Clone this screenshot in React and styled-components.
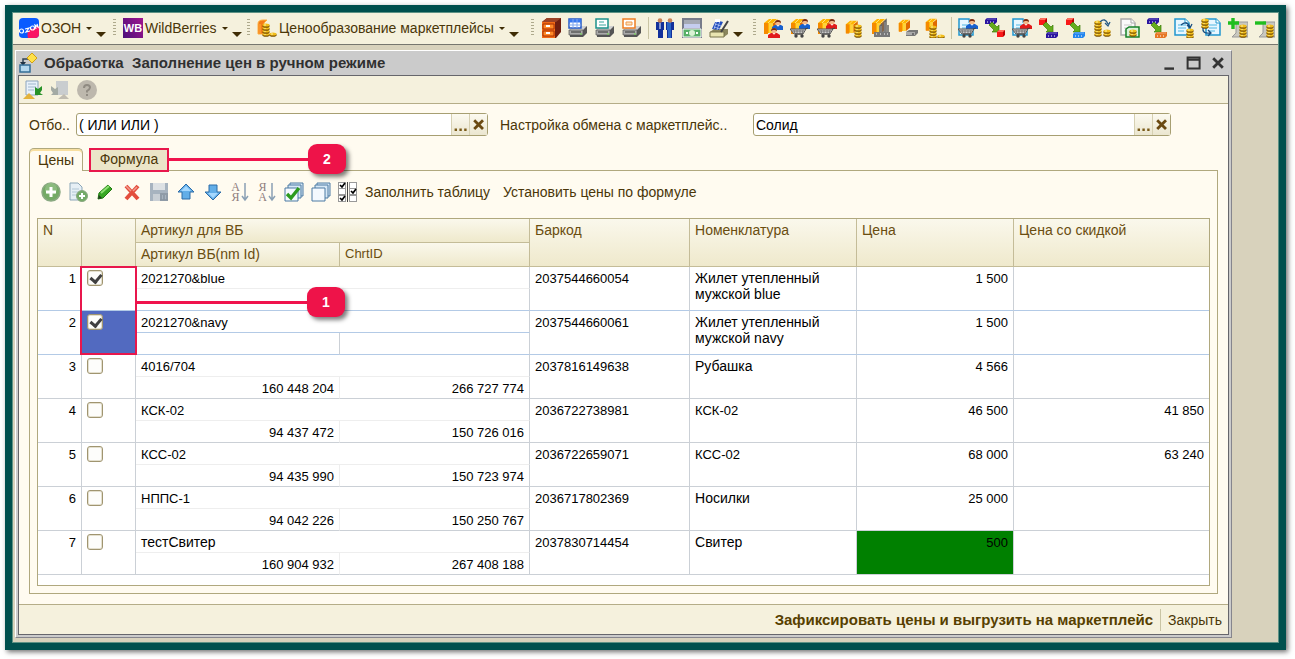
import React, { useState } from "react";
import styled, { createGlobalStyle } from "styled-components";

const items = [
    { id: 1, article: "2021270&blue", nmId: "", chrtId: "", barcode: "2037544660054", name: "Жилет утепленный мужской blue", price: "1 500", sale: "" },
    { id: 2, article: "2021270&navy", nmId: "", chrtId: "", barcode: "2037544660061", name: "Жилет утепленный мужской navy", price: "1 500", sale: "" },
    { id: 3, article: "4016/704", nmId: "160 448 204", chrtId: "266 727 774", barcode: "2037816149638", name: "Рубашка", price: "4 566", sale: "" },
    { id: 4, article: "КСК-02", nmId: "94 437 472", chrtId: "150 726 016", barcode: "2036722738981", name: "КСК-02", price: "46 500", sale: "41 850" },
    { id: 5, article: "КСС-02", nmId: "94 435 990", chrtId: "150 723 974", barcode: "2036722659071", name: "КСС-02", price: "68 000", sale: "63 240" },
    { id: 6, article: "НППС-1", nmId: "94 042 226", chrtId: "150 250 767", barcode: "2036717802369", name: "Носилки", price: "25 000", sale: "" },
    { id: 7, article: "тестСвитер", nmId: "160 904 932", chrtId: "267 408 188", barcode: "2037830714454", name: "Свитер", price: "500", sale: "", changed: true, wide: true },
]

/* icon parts, all on a 20x20 grid */
const Svg = ({ children, size = 20 }) => <svg width={size} height={size} viewBox="0 0 20 20" aria-hidden="true">{children}</svg>

const Box = () => <g>
    <path d="M1 5l5-4h8l-4 4v10H1z" fill="#ffb400" />
    <path d="M1 5h4v11H1z" fill="#f58a00" />
    <path d="M6 5h4v10H6z" fill="#ffd23a" />
    <path d="M10 5l5-4v10l-5 4z" fill="#e06a00" />
    <path d="M5 5l4-4M10 5l5-4" stroke="#ffe27a" />
</g>
const Person = ({ x, y, color }) => <g transform={`translate(${x} ${y})`}>
    <path d="M-1 10V7l3-2h6l3 2v3z" fill={color} />
    <circle cx="5" cy="3" r="2.8" fill="#f3b98c" />
    <path d="M2 3Q2 0 5 0t3 3L6 2H4z" fill="#7a2a10" />
    <path d="M4 5l1 2 1-2z" fill="#fff" />
</g>
const Cart = () => <g>
    <path d="M0 11h16l-3 5H4z" fill="#cfcfcf" stroke="#555" />
    <path d="M4 12l1 4M7 12v4M10 12v4M13 12l-1 4M2 13h12" stroke="#777" />
    <path d="M13 16H5M15 11l3-1" stroke="#444" />
    <circle cx="6" cy="18" r="1.7" fill="#444" /><circle cx="12" cy="18" r="1.7" fill="#444" />
</g>
const Coins = ({ x, y, n = 4 }) => <g transform={`translate(${x} ${y})`}>
    {[...Array(n)].map((_, i) => <g key={i}>
        <ellipse cx="4" cy={n * 3 - i * 3} rx="3.7" ry="1.8" fill="#7a5000" />
        <ellipse cx="4" cy={n * 3 - i * 3 - 1} rx="3.5" ry="1.5" fill="#f2be1c" />
        <path d={`M2 ${n * 3 - i * 3 - 1}h2`} stroke="#fff3a0" />
    </g>)}
</g>
const Page = ({ x = 0, y = 0, gray }) => <g transform={`translate(${x} ${y})`}>
    <path d="M1 1h10l4 4v12H1z" fill={gray ? "#fafafa" : "#e8f7ff"} stroke={gray ? "#aaa" : "#2197cf"} strokeWidth="1.5" />
    <path d="M11 1v4h4" fill="#fff" stroke={gray ? "#aaa" : "#2197cf"} />
    <path d="M4 7h8M4 10h8M4 13h6" stroke={gray ? "#ccc" : "#4eb6e2"} />
</g>
const Cube = ({ x, y }) => <g transform={`translate(${x} ${y})`}>
    <path d="M0 2l2-2h6v5L6 7H0z" fill="#b80000" /><path d="M0 2h6v5H0z" fill="#f91919" /><path d="M0 2l2-2h6L6 2z" fill="#ff6b5a" />
</g>
const Block = ({ x, y, color }) => <g transform={`translate(${x} ${y})`}>
    <path d="M0 2l2-2h10v4l-2 2H0z" fill={color} /><path d="M2 4h1M5 4h1M8 4h1" stroke="#fff" />
    <path d="M2 1h9" stroke="#fff" opacity=".35" />
</g>
const Link = () => <path d="M5 6l2-2 5 5 2-2v7H7l2-2-5-5z" fill="#65ad1c" stroke="#3d7b08" strokeWidth=".7" />
const Printer = ({ color, children }) => <Svg>
    <path d="M2 12l5-4h12v7l-4 4H2z" fill="#555" />
    <path d="M2 12l5-4h12l-4 4z" fill="#d2d2d2" />
    <path d="M1 12h14v5H1z" fill="#aaa" stroke="#555" strokeWidth=".7" />
    <path d="M3 14h10" stroke="#333" /><path d="M12 16h2" stroke="#6fe04a" />
    <path d="M1 1h12v9H1z" fill="#fff" stroke={color} strokeWidth="1.5" />
    {children}
</Svg>

const OzonIcon = () => <Svg>
    <rect width="20" height="20" rx="4" fill="#0a5bff" />
    <path d="M9 20Q7 13 12 11l8-3v8q0 4-4 4z" fill="#fa1464" />
    <circle cx="2.5" cy="13" r="2" fill="none" stroke="#fff" strokeWidth="1.2" />
    <path d="M6 11l4-1-3 4 4-1" fill="none" stroke="#fff" strokeWidth="1.2" />
    <circle cx="13.5" cy="10" r="2" fill="none" stroke="#fff" strokeWidth="1.2" />
    <path d="M17 11l-1-4 3 2-1-3" fill="none" stroke="#fff" strokeWidth="1.2" />
</Svg>
const PriceIcon = () => <Svg>
    <path d="M1 16V6q0-4 5-4h4l-3 3v11zM3 6v9" fill="#f47b18" stroke="#ffae3a" />
    <Coins x={5} y={5} n={4} /><Coins x={12} y={14} n={1} />
</Svg>

const catalogIcons = [
    ["Справочник", <Svg><path d="M1 4l5-4h14v14l-5 6H1z" fill="#6f1e10" /><path d="M1 4l5-4h14l-5 4z" fill="#9b4226" /><path d="M1 4h13v16H1z" fill="#f26a16" /><path d="M2 6h11v5H2zM2 13h11v5H2z" fill="#ff8a28" stroke="#a92f00" /><path d="M5 8h4M5 15h4" stroke="#fff" strokeWidth="2" /></Svg>],
    ["Печать таблицы", <Printer color="#2559c5"><path d="M1 3h12" stroke="#3677f0" strokeWidth="3" /><path d="M1 7h12M5 1v9M9 1v9" stroke="#7fa7ef" /></Printer>],
    ["Печать документа", <Printer color="#1d928c"><path d="M4 4h5M4 7h7" stroke="#38a59e" /></Printer>],
    ["Печать этикетки", <Printer color="#ee7d22"><path d="M4 4h6v3H4z" fill="#ffe1b8" stroke="#ee9a50" /></Printer>],
    "sep",
    ["Контрагенты", <Svg><path d="M1 4h8v8H8v8H3v-8H1zM11 4h8v8h-2v8h-5v-8h-1z" fill="#12309b" /><path d="M12 4h4v16h-3v-8h-1z" fill="#2b64c5" /><circle cx="5" cy="2.5" r="2.3" fill="#c98357" /><circle cx="15" cy="2.5" r="2.3" fill="#c98357" /><path d="M5 5v6" stroke="#fff" /></Svg>],
    ["Деньги", <Svg><path d="M0 0h20v20H0z" fill="#777c8a" /><path d="M2 2h16v4H2z" fill="#a5a9b4" /><path d="M2 6h16v4H2z" fill="#c5cdef" /><path d="M1 11h18v8H1z" fill="#57af68" stroke="#fff" /><circle cx="10" cy="15" r="3" fill="#d9f3d4" /><path d="M4 15h2M14 15h2" stroke="#fff" strokeWidth="2" /></Svg>],
    ["Отчёт", <Svg><path d="M1 14l4-3h14v5l-4 3H1z" fill="#8a865e" /><path d="M1 14h14v5H1z" fill="#e9e5b1" stroke="#77724b" /><path d="M3 11l4-9 7 2-4 8z" fill="#234ebd" /><path d="M5 9l6 2M6 6l6 2M8 2L5 11M11 3L8 12" stroke="#d5e2ff" strokeWidth=".6" /><path d="M6 1h5v3H6z" fill="#fff" /><path d="M12 14l7-11" stroke="#444" strokeWidth="2" /></Svg>],
    "more",
]

const goodsIcons = [
    ["Покупатели", <Svg><Box /><Person x={10} y={2} color="#1760cf" /><Person x={6} y={10} color="#e11b1b" /></Svg>],
    ["Заказ", <Svg><Box /><Person x={10} y={1} color="#1760cf" /><Cart /></Svg>],
    ["Возврат", <Svg><Box /><Person x={10} y={1} color="#e11b1b" /><Cart /></Svg>],
    ["Цены", <Svg><g transform="translate(1 2) scale(.85)"><Box /></g><Coins x={10} y={6} n={4} /></Svg>],
    ["Склад", <Svg><Box /><path d="M3 14h16v5H3z" fill="#777" /><path d="M9 14V8l2-2v8M13 14V4l2-2v12M17 14V7" fill="#ccc" stroke="#666" strokeWidth="1.5" /><path d="M5 16h1M9 16h1M13 16h1M16 16h1" stroke="#fff" /></Svg>],
    ["Остатки", <Svg><g transform="translate(0 1) scale(.8)"><Box /></g><path d="M8 14l3-2h9v3l-3 3H8z" fill="#777" /><path d="M8 14h9v3H8z" fill="#aaa" /><path d="M14 16h2" stroke="#333" /></Svg>],
    ["Скидки", <Svg><g transform="scale(.8)"><Box /></g><Coins x={4} y={7} n={4} /><Coins x={12} y={16} n={1} /></Svg>],
    "sep",
    ["Заказ покупателя", <Svg><Page /><Person x={9} y={1} color="#1760cf" /><Cart /></Svg>],
    ["Обмен", <Svg><Block x={0} y={0} color="#2b15a0" /><Link /><Cube x={12} y={12} /></Svg>],
    ["Возврат покупателя", <Svg><Page /><Person x={9} y={1} color="#e11b1b" /><Cart /></Svg>],
    ["Выгрузка", <Svg><Cube x={0} y={0} /><Link /><Block x={7} y={14} color="#2b15a0" /></Svg>],
    ["Загрузка", <Svg><Cube x={0} y={0} /><Link /><Block x={7} y={14} color="#2386ee" /></Svg>],
    ["Пересчёт цен", <Svg><Coins x={1} y={2} n={5} /><Coins x={10} y={11} n={2} /><path d="M7 4q5-5 8 2m-3-1l3 3 2-4" fill="none" stroke="#275a86" strokeWidth="1.3" /></Svg>],
    ["Документ цен", <Svg><Page gray /><path d="M6 11l3-2h10v10H6z" fill="#d9f2d9" stroke="#168129" strokeWidth="1.5" /><Coins x={9} y={11} n={2} /></Svg>],
    ["Перемещение", <Svg><Block x={0} y={0} color="#2b15a0" /><Link /><Block x={8} y={14} color="#e77724" /></Svg>],
    ["Выгрузить цены", <Svg><Page /><Coins x={12} y={10} n={3} /><path d="M7 7q6-5 9 2m-3-2l3 3 2-4" fill="none" stroke="#174d80" strokeWidth="1.3" /></Svg>],
    ["Загрузить цены", <Svg><Page x={4} /><Coins x={0} y={0} n={3} /><path d="M2 10q-1 6 7 5m-2-3l3 3-3 3" fill="none" stroke="#174d80" strokeWidth="1.3" /></Svg>],
    ["Добавить цены", <Svg><path d="M4 19l4-4V4h12v15z" fill="#c9c8c0" stroke="#999" /><Coins x={11} y={6} n={4} /><path d="M5 0v11M0 5h11" stroke="#1fbe1f" strokeWidth="3.4" /></Svg>],
    ["Удалить цены", <Svg><path d="M4 19l4-4V4h12v15z" fill="#c9c8c0" stroke="#999" /><Coins x={11} y={6} n={4} /><path d="M0 5h11" stroke="#1fbe1f" strokeWidth="3.4" /></Svg>],
]

const Sheets = ({ checked }) => <Svg>
    <path d="M6 1h13v13H6z" fill="#d7e8f6" stroke="#4c7ba3" /><path d="M4 3h13v13H4z" fill="#d7e8f6" stroke="#4c7ba3" />
    <path d="M1 6h13v13H1z" fill="#f4f9fe" stroke="#4c7ba3" />
    {checked && <path d="M3 12l4 4 8-10" fill="none" stroke="#2c9b1e" strokeWidth="3.4" />}
</Svg>
const BigArrow = ({ down }) => <Svg>
    <path d="M10 2l8 8h-4v7H6v-7H2z" transform={down ? "rotate(180 10 10)" : undefined} fill="#62aee8" stroke="#2d6ca8" />
    <path d="M10 4l5 5H5z" transform={down ? "rotate(180 10 10)" : undefined} fill="#a5d8ff" />
</Svg>
const TickBoxes = () => <Svg>
    <path d="M0 0h8v20H0zM11 0h8v20h-8z" fill="#999" />
    <path d="M1 1h6v5H1zM1 7h6v5H1zM1 14h6v5H1zM12 1h6v5h-6zM12 7h6v5h-6zM12 14h6v5h-6z" fill="#fff" />
    <path d="M9.5 0v20" stroke="#444" />
    <path d="M2 3l2 2 3-4M2 16l2 2 3-4M13 9l2 2 3-4" fill="none" stroke="#000" strokeWidth="1.7" />
</Svg>
const SortIcon = ({ first, last }) => <Sort>
    <SortLetters><span>{first}</span><span>{last}</span></SortLetters>
    <svg width="8" height="20" viewBox="0 0 8 20" aria-hidden="true"><path d="M4 1v16M1 14l3 4 3-4" fill="none" stroke="#8aa0b4" strokeWidth="1.5" /></svg>
</Sort>

const tableIcons = [
    ["Добавить", <Svg><circle cx="10" cy="10" r="9" fill="#74aa66" stroke="#8aa982" strokeWidth="1.5" /><circle cx="10" cy="7" r="6" fill="#9bc68e" opacity=".6" /><path d="M10 5v10M5 10h10" stroke="#fff" strokeWidth="3" /></Svg>],
    ["Скопировать", <Svg><path d="M2 1h8l4 4v13H2z" fill="#e6eff5" stroke="#8ba6b8" /><path d="M4 7h7M4 10h7M4 13h5" stroke="#b2c7d5" /><circle cx="14" cy="14" r="5.5" fill="#74aa66" stroke="#8aa982" /><path d="M14 11v6M11 14h6" stroke="#fff" strokeWidth="2" /></Svg>],
    ["Изменить", <Svg><path d="M3 17l1-6 9-8 4 4-9 9z" fill="#39a724" stroke="#227b13" /><path d="M6 11l8-7" stroke="#8fe073" strokeWidth="2" /><path d="M3 17l1-4 3 3z" fill="#24401f" /></Svg>],
    ["Удалить", <Svg><path d="M4 4l12 13M16 4L4 17" stroke="#e34e3d" strokeWidth="4" /><path d="M4 4l5 5M15 5l-4 4" stroke="#f39b8f" strokeWidth="1.5" /></Svg>],
    ["Сохранить", <Svg><path d="M1 1h18v18H1z" fill="#a7b3bf" /><path d="M4 1h12v7H4z" fill="#dde1e4" /><path d="M4 12h7v7H4z" fill="#c9cfd5" /><path d="M11 12h8M11 18h8M12 13v5M15 13v5M18 13v5" stroke="#8894a0" strokeWidth="1.5" /></Svg>],
    ["Вверх", <BigArrow />],
    ["Вниз", <BigArrow down />],
    ["По возрастанию", <SortIcon first="А" last="Я" />],
    ["По убыванию", <SortIcon first="Я" last="А" />],
    ["Отметить все", <Sheets checked />],
    ["Снять отметки", <Sheets />],
    ["Инвертировать", <TickBoxes />],
]

function IconButtons({ icons }) {
    return icons.map((icon, i) => {
        if (icon === "sep") return <Separator key={i} tight />
        if (icon === "more") return <More key={i} aria-label="Ещё" />
        return <IconButton key={i} aria-label={icon[0]}>{icon[1]}</IconButton>
    })
}

function Field({ id, label, value }) {
    const [text, setText] = useState(value)
    return (<>
        <label htmlFor={id}>{label}</label>
        <FieldBox>
            <input id={id} value={text} onChange={(e) => setText(e.target.value)} />
            <FieldButton aria-label="Выбрать"><Svg size={16}><path d="M2 16h3M8 16h3M14 16h3" stroke="#7a5a18" strokeWidth="3" /></Svg></FieldButton>
            <FieldButton aria-label="Очистить" onClick={() => setText("")}><Svg size={16}><path d="M4 4l11 11M15 4L4 15" stroke="#6b4a12" strokeWidth="3.5" /></Svg></FieldButton>
        </FieldBox>
    </>)
}

export default function App() {
    const [checked, setChecked] = useState([1, 2])

    function toggle(id) {
        setChecked(checked.includes(id) ? checked.filter((c) => c !== id) : [...checked, id])
    }

    return (<Frame>
        <GlobalStyle />
        <Desktop>
            <MainBar>
                <Group width={99}>
                    <MenuButton><OzonIcon />ОЗОН<Caret /></MenuButton>
                    <More aria-label="Ещё" />
                </Group>
                <Group width={134} grip>
                    <MenuButton><WbLogo>WB</WbLogo>WildBerries<Caret /></MenuButton>
                    <More aria-label="Ещё" />
                </Group>
                <Group width={284} grip>
                    <MenuButton><PriceIcon />Ценообразование маркетплейсы<Caret /></MenuButton>
                    <More aria-label="Ещё" />
                </Group>
                <Group width={222} grip><IconButtons icons={catalogIcons} /></Group>
                <Group grip><IconButtons icons={goodsIcons} /></Group>
            </MainBar>
            <Window>
                <TitleBar>
                    <Svg><path d="M4 11V6h8" fill="none" stroke="#345" strokeWidth="1.5" /><path d="M1 9l3 4 3-4z" fill="#234" /><path d="M1 12h10v7H1z" fill="#b5d8ee" stroke="#356e96" strokeWidth="1.5" /><path d="M13 0l5 5-5 5-5-5z" fill="#ffe14a" stroke="#d2a112" /></Svg>
                    <h1>Обработка&nbsp; Заполнение цен в ручном режиме</h1>
                    <WindowButton aria-label="Свернуть"><Svg size={16}><path d="M3 17h12" stroke="#333" strokeWidth="3" /></Svg></WindowButton>
                    <WindowButton aria-label="Развернуть"><Svg size={16}><path d="M2 3h15v14H2zM2 6h15" fill="none" stroke="#333" strokeWidth="2.5" /></Svg></WindowButton>
                    <WindowButton aria-label="Закрыть окно"><Svg size={16}><path d="M4 4l12 12M16 4L4 16" stroke="#333" strokeWidth="3.5" /></Svg></WindowButton>
                </TitleBar>
                <Content>
                    <CommandBar>
                        <IconButton aria-label="Загрузить"><Svg><path d="M3 1h12v14H3z" fill="#e8f1fa" stroke="#8ca5bd" /><path d="M5 4h8M5 7h8M5 10h6" stroke="#9fb7cc" /><path d="M0 19l6-6 6 6z" fill="#e3b33a" /><path d="M19 6l-4 3-3-2v8h8l-3-2 2-3z" fill="#279228" /></Svg></IconButton>
                        <IconButton aria-label="Восстановить"><Svg><path d="M6 1h12v14H6z" fill="#c9cdcf" /><path d="M8 19l6-5 5 5z" fill="#c0bcb0" /><path d="M1 6l4 3 3-2v8H1l2-2-2-3z" fill="#a3aaa4" /></Svg></IconButton>
                        <IconButton aria-label="Справка"><Svg><circle cx="10" cy="10" r="10" fill="#bdb8ad" /><path d="M7 8q0-3 3-3t3 2.5q0 1.5-3 3.5v1.5M10 14v2" fill="none" stroke="#908b82" strokeWidth="2" /></Svg></IconButton>
                    </CommandBar>
                    <Fields>
                        <Field id="filter" label="Отбо.." value="( ИЛИ ИЛИ )" />
                        <Field id="settings" label="Настройка обмена с маркетплейс.." value="Солид" />
                    </Fields>
                    <Tabs role="tablist">
                        <Tab role="tab" aria-selected="true" active>Цены</Tab>
                        <Marked>
                            <Tab role="tab" aria-selected="false">Формула</Tab>
                            <Callout><Pointer /><Badge>2</Badge></Callout>
                        </Marked>
                    </Tabs>
                    <Panel>
                        <TableBar>
                            <IconButtons icons={tableIcons} />
                            <TextButton>Заполнить таблицу</TextButton>
                            <TextButton>Установить цены по формуле</TextButton>
                        </TableBar>
                        <TableBox>
                            <Table>
                                <colgroup>
                                    {[44, 54, 204, 190, 160, 167, 157].map((w, i) => <Col key={i} w={w} />)}
                                    <col />
                                </colgroup>
                                <thead>
                                    <tr>
                                        <Head rowSpan={2}>N</Head>
                                        <Head rowSpan={2} aria-label="Отметка" />
                                        <Head colSpan={2}>Артикул для ВБ</Head>
                                        <Head rowSpan={2}>Баркод</Head>
                                        <Head rowSpan={2}>Номенклатура</Head>
                                        <Head rowSpan={2}>Цена</Head>
                                        <Head rowSpan={2}>Цена со скидкой</Head>
                                    </tr>
                                    <tr>
                                        <Head>Артикул ВБ(nm Id)</Head>
                                        <Head latin>ChrtID</Head>
                                    </tr>
                                </thead>
                                <tbody>
                                    {items.map((item) => <React.Fragment key={item.id}>
                                        <tr>
                                            <Cell rowSpan={2} right blue={item.id < 3}>{item.id}</Cell>
                                            <Cell rowSpan={2} wide blue={item.id < 3} selected={item.id === 2}>
                                                <Check type="checkbox" aria-label={`Строка ${item.id}`} checked={checked.includes(item.id)} onChange={() => toggle(item.id)} />
                                                {item.id === 1 && <Callout rows><Pointer long /><Badge>1</Badge></Callout>}
                                            </Cell>
                                            <Cell colSpan={2} wide={item.wide} light={item.id !== 2} blue={item.id === 2}>{item.article}</Cell>
                                            <Cell rowSpan={2} blue={item.id < 3}>{item.barcode}</Cell>
                                            <Cell rowSpan={2} blue={item.id < 3} wide={/[а-я]/.test(item.name)}>{item.name}</Cell>
                                            <Cell rowSpan={2} blue={item.id < 3} right changed={item.changed}>{item.price}</Cell>
                                            <Cell rowSpan={2} blue={item.id < 3} right>{item.sale}</Cell>
                                        </tr>
                                        <tr>
                                            <Cell right blue={item.id < 3} lightSide={item.id !== 2}>{item.nmId}</Cell>
                                            <Cell right blue={item.id < 3}>{item.chrtId}</Cell>
                                        </tr>
                                    </React.Fragment>)}
                                </tbody>
                            </Table>
                        </TableBox>
                    </Panel>
                    <Footer>
                        <TextButton bold>Зафиксировать цены и выгрузить на маркетплейс</TextButton>
                        <Separator />
                        <TextButton>Закрыть</TextButton>
                    </Footer>
                </Content>
            </Window>
        </Desktop>
    </Frame>)
}

const GlobalStyle = createGlobalStyle`
*{
    box-sizing: border-box;
}
body{
    margin: 0;
    background-color: #FFFFFF;
    font-family: "Liberation Sans", Arial, sans-serif;
    font-size: 14px;
    line-height: 16px;
    color: #4A3608;
}
button, input{
    font: inherit;
    color: inherit;
    padding: 0;
    margin: 0;
    border: none;
    background: none;
}
svg{
    display: block;
    flex: none;
}
`
const Frame = styled.div`
padding: 5px 9px 9px 5px;
`
const Desktop = styled.main`
border: 7px solid #00504E;
outline: 1px solid #5E9285;
outline-offset: -8px;
padding: 1px;
background-color: #D8D2BC;
box-shadow: 2px 2px 5px #00000090;
`
const MainBar = styled.div`
height: 32px;
display: flex;
padding-bottom: 1px;
background-color: #F5F1DD;
border-bottom: 1px solid #77776F;
`
const Group = styled.div.withConfig({ shouldForwardProp: (p) => p !== "grip" && p !== "width" })`
width: ${(props) => props.width ? `${props.width}px` : "auto"};
flex: none;
display: flex;
align-items: center;
gap: 7px;
padding-left: 6px;
&::before{
    content: "";
    display: ${(props) => props.grip ? "block" : "none"};
    width: 3px;
    height: 18px;
    margin-left: -5px;
    background: repeating-linear-gradient(#AEA98C 0 1px, transparent 1px 3px);
}
`
const MenuButton = styled.button`
display: flex;
align-items: center;
gap: 2px;
white-space: nowrap;
`
const Caret = styled.span`
margin-left: 3px;
border: 3px solid transparent;
border-top-color: #3F2D05;
border-bottom: none;
`
const More = styled.button`
align-self: flex-end;
margin: 0 0 6px -3px;
border: 5px solid transparent;
border-top-color: #3F2D05;
border-bottom: none;
`
const WbLogo = styled.span`
width: 20px;
height: 20px;
background: linear-gradient(60deg, #4B0F7A, #A0158F);
color: #FFFFFF;
font-size: 11px;
font-weight: 700;
line-height: 20px;
text-align: center;
`
const IconButton = styled.button`
width: 20px;
height: 20px;
flex: none;
`
const Sort = styled.span`
display: flex;
`
const SortLetters = styled.span`
width: 11px;
font-family: "Liberation Serif", serif;
font-size: 12px;
line-height: 10px;
color: #8F7D7D;
span{
    display: block;
}
`
const Separator = styled.span.withConfig({ shouldForwardProp: (p) => p !== "tight" })`
width: 1px;
height: 22px;
margin: ${(props) => props.tight ? "0 -1px" : "0"};
background-color: #C9C4A4;
`
const Window = styled.section`
margin: 5px 46px 4px 2px;
padding: 0 2px 2px;
background-color: #CBCBCB;
border: 1px solid #FFFFFF;
border-right-color: #85858D;
border-bottom-color: #85858D;
`
const TitleBar = styled.header`
height: 24px;
display: flex;
align-items: center;
gap: 8px;
padding: 0 3px 0 1px;
color: #303030;
h1{
    flex: 1;
    margin: 0 0 0 -3px;
    font-size: 15px;
    line-height: 16px;
}
`
const WindowButton = styled.button`
width: 16px;
height: 16px;
`
const Content = styled.div`
background-color: #FFFBF0;
border: 1px solid #66666B;
`
const CommandBar = styled.div`
height: 28px;
display: flex;
align-items: center;
gap: 7px;
padding-left: 4px;
background-color: #F5F1DD;
border-bottom: 1px solid #B5AD88;
`
const Fields = styled.div`
display: grid;
grid-template-columns: 47px 412fr 265px 418fr;
align-items: center;
padding: 9px 57px 12px 10px;
label + div + label{
    padding-left: 12px;
}
`
const FieldBox = styled.div`
height: 23px;
display: flex;
background-color: #FFFFFF;
border: 1px solid #A79F72;
border-radius: 3px;
color: #000000;
input{
    flex: 1;
    min-width: 0;
    padding-left: 2px;
    outline: none;
}
`
const FieldButton = styled.button`
width: 18px;
display: flex;
align-items: center;
justify-content: center;
background: linear-gradient(#FCFAF0, #EBE6D0);
border-left: 1px solid #D6D0B2;
`
const Tabs = styled.div`
display: flex;
gap: 6px;
padding-left: 10px;
`
const Marked = styled.div`
position: relative;
`
const Tab = styled.button.withConfig({ shouldForwardProp: (p) => p !== "active" })`
position: relative;
width: ${(props) => props.active ? "54px" : "80px"};
height: ${(props) => props.active ? "23px" : "22px"};
margin-bottom: ${(props) => props.active ? "-1px" : "0"};
background-color: ${(props) => props.active ? "#FFFBF0" : "#EBE5C8"};
border: ${(props) => props.active ? "1px solid #B0A87E" : "none"};
border-bottom: none;
border-radius: 5px 5px 0 0;
box-shadow: ${(props) => props.active ? "inset 0 2px #F8DFA0" : "none"};
`
const Callout = styled.div.withConfig({ shouldForwardProp: (p) => p !== "rows" })`
position: absolute;
z-index: 2;
top: ${(props) => props.rows ? "-1px" : "0"};
left: ${(props) => props.rows ? "-2px" : "0"};
width: ${(props) => props.rows ? "57px" : "80px"};
height: ${(props) => props.rows ? "89px" : "24px"};
border: 2px solid #E8174C;
pointer-events: none;
`
const Pointer = styled.span.withConfig({ shouldForwardProp: (p) => p !== "long" })`
position: absolute;
left: 100%;
top: ${(props) => props.long ? "33px" : "8px"};
width: ${(props) => props.long ? "172px" : "141px"};
height: 3px;
background-color: #F0134D;
& + span{
    top: ${(props) => props.long ? "19px" : "-6px"};
    left: ${(props) => props.long ? "225px" : "217px"};
}
`
const Badge = styled.span`
position: absolute;
width: 38px;
height: 30px;
border-radius: 9px;
background-color: #EE1349;
box-shadow: 3px 3px 4px #00000080;
color: #FFFFFF;
font-size: 14px;
font-weight: 700;
line-height: 30px;
text-align: center;
`
const Panel = styled.div`
margin: 0 10px 10px;
padding: 0 7px 7px;
border: 1px solid #B0A87E;
`
const TableBar = styled.div`
height: 47px;
display: flex;
align-items: center;
gap: 7px;
padding: 0 4px 5px;
`
const TextButton = styled.button.withConfig({ shouldForwardProp: (p) => p !== "bold" })`
font-size: ${(props) => props.bold ? "15px" : "14px"};
font-weight: ${(props) => props.bold ? 700 : 400};
color: ${(props) => props.bold ? "#574000" : "#4A3608"};
white-space: nowrap;
& + &{
    margin-left: 6px;
}
`
const TableBox = styled.div`
padding-bottom: 10px;
background-color: #FFFFFF;
border: 1px solid #B0A87E;
`
const Table = styled.table`
width: 100%;
table-layout: fixed;
border-collapse: separate;
border-spacing: 0;
`
const Col = styled.col.withConfig({ shouldForwardProp: (p) => p !== "w" })`
width: ${(props) => props.w}px;
`
const Head = styled.th.withConfig({ shouldForwardProp: (p) => p !== "latin" })`
height: 24px;
padding: 3px 5px;
background: linear-gradient(#FAF8EC, #EFE9CC);
border-right: 1px solid #C4BC98;
border-bottom: 1px solid #C4BC98;
color: #6A4D10;
font-size: ${(props) => props.latin ? "13px" : "14px"};
font-weight: 400;
text-align: left;
vertical-align: top;
white-space: nowrap;
&:last-child{
    border-right: ${(props) => props.rowSpan ? "none" : "1px solid #C4BC98"};
}
`
const cellProps = ["right", "blue", "light", "lightSide", "selected", "changed", "wide"]
const Cell = styled.td.withConfig({ shouldForwardProp: (p) => !cellProps.includes(p) })`
position: relative;
height: 22px;
padding: ${(props) => props.wide ? "3px 5px 2px" : "4px 5px 1px"};
background-color: ${(props) => props.selected ? "#526AC0" : props.changed ? "#008000" : "transparent"};
border-right: 1px solid ${(props) => props.lightSide ? "#EEEEEE" : "#CBD0D6"};
border-bottom: 1px solid ${(props) => props.blue ? "#B3CAE6" : props.light ? "#EEEEEE" : "#CBD0D6"};
color: #000000;
font-size: ${(props) => props.wide ? "14px" : "13px"};
text-align: ${(props) => props.right ? "right" : "left"};
vertical-align: top;
&:last-child{
    border-right: ${(props) => props.rowSpan ? "none" : "1px solid #CBD0D6"};
}
`
const Check = styled.input`
appearance: none;
display: block;
width: 16px;
height: 16px;
background-color: #FDFDFB;
border: 1px solid #A09570;
border-radius: 3px;
box-shadow: inset 0 0 0 1px #E4E0CF;
&:checked::after{
    content: "";
    display: block;
    width: 5px;
    height: 8px;
    margin: 1px 0 0 4px;
    border: solid #404040;
    border-width: 0 3px 3px 0;
    transform: rotate(40deg);
}
`
const Footer = styled.footer`
height: 30px;
display: flex;
align-items: center;
justify-content: flex-end;
gap: 7px;
padding-right: 6px;
background-color: #F5F1DD;
border-top: 1px solid #B5AD88;
`
